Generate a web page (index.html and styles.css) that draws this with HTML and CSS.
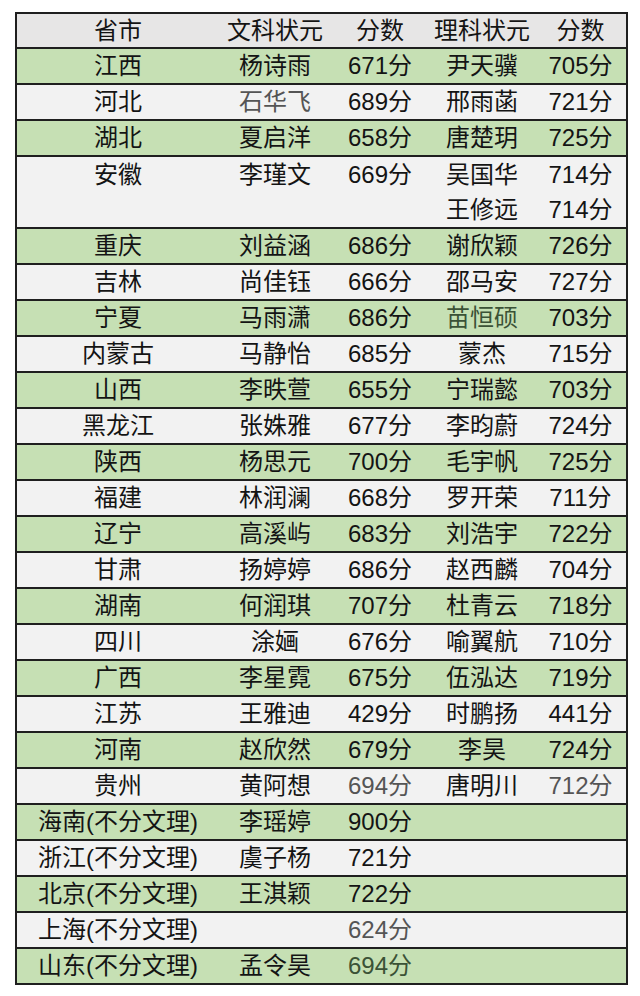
FILE: index.html
```html
<!DOCTYPE html>
<html lang="zh">
<head>
<meta charset="utf-8">
<link rel="stylesheet" href="styles.css">
<title>状元</title>
</head>
<body>
<table class="scores">
  <colgroup>
    <col class="c1"><col class="c2"><col class="c3"><col class="c4"><col class="c5">
  </colgroup>
  <thead>
    <tr class="head"><th>省市</th><th>文科状元</th><th>分数</th><th>理科状元</th><th>分数</th></tr>
  </thead>
  <tbody>
    <tr class="g"><td>江西</td><td>杨诗雨</td><td>671分</td><td>尹天骥</td><td>705分</td></tr>
    <tr class="w"><td>河北</td><td class="grey">石华飞</td><td>689分</td><td>邢雨菡</td><td>721分</td></tr>
    <tr class="g"><td>湖北</td><td>夏启洋</td><td>658分</td><td>唐楚玥</td><td>725分</td></tr>
    <tr class="w split"><td>安徽</td><td>李瑾文</td><td>669分</td><td>吴国华</td><td>714分</td></tr>
    <tr class="w"><td></td><td></td><td></td><td>王修远</td><td>714分</td></tr>
    <tr class="g"><td>重庆</td><td>刘益涵</td><td>686分</td><td>谢欣颖</td><td>726分</td></tr>
    <tr class="w"><td>吉林</td><td>尚佳钰</td><td>666分</td><td>邵马安</td><td>727分</td></tr>
    <tr class="g"><td>宁夏</td><td>马雨潇</td><td>686分</td><td class="olive">苗恒硕</td><td>703分</td></tr>
    <tr class="w"><td>内蒙古</td><td>马静怡</td><td>685分</td><td>蒙杰</td><td>715分</td></tr>
    <tr class="g"><td>山西</td><td>李昳萱</td><td>655分</td><td>宁瑞懿</td><td>703分</td></tr>
    <tr class="w"><td>黑龙江</td><td>张姝雅</td><td>677分</td><td>李昀蔚</td><td>724分</td></tr>
    <tr class="g"><td>陕西</td><td>杨思元</td><td>700分</td><td>毛宇帆</td><td>725分</td></tr>
    <tr class="w"><td>福建</td><td>林润澜</td><td>668分</td><td>罗开荣</td><td>711分</td></tr>
    <tr class="g"><td>辽宁</td><td>高溪屿</td><td>683分</td><td>刘浩宇</td><td>722分</td></tr>
    <tr class="w"><td>甘肃</td><td>扬婷婷</td><td>686分</td><td>赵西麟</td><td>704分</td></tr>
    <tr class="g"><td>湖南</td><td>何润琪</td><td>707分</td><td>杜青云</td><td>718分</td></tr>
    <tr class="w"><td>四川</td><td>涂婳</td><td>676分</td><td>喻翼航</td><td>710分</td></tr>
    <tr class="g"><td>广西</td><td>李星霓</td><td>675分</td><td>伍泓达</td><td>719分</td></tr>
    <tr class="w"><td>江苏</td><td>王雅迪</td><td>429分</td><td>时鹏扬</td><td>441分</td></tr>
    <tr class="g"><td>河南</td><td>赵欣然</td><td>679分</td><td>李昊</td><td>724分</td></tr>
    <tr class="w"><td>贵州</td><td>黄阿想</td><td class="grey">694分</td><td>唐明川</td><td class="grey">712分</td></tr>
    <tr class="g"><td>海南(不分文理)</td><td>李瑶婷</td><td>900分</td><td></td><td></td></tr>
    <tr class="w"><td>浙江(不分文理)</td><td>虞子杨</td><td>721分</td><td></td><td></td></tr>
    <tr class="g"><td>北京(不分文理)</td><td>王淇颖</td><td>722分</td><td></td><td></td></tr>
    <tr class="w"><td>上海(不分文理)</td><td></td><td class="grey">624分</td><td></td><td></td></tr>
    <tr class="g"><td>山东(不分文理)</td><td>孟令昊</td><td class="olive">694分</td><td></td><td></td></tr>
  </tbody>
</table>
</body>
</html>
```
FILE: styles.css
```css
html, body {
  margin: 0;
  padding: 0;
  background: #ffffff;
}

body {
  padding: 12px 12px 0 15px;
  font-family: "Liberation Sans", "Noto Sans CJK SC", sans-serif;
  color: #141414;
}

.scores {
  border-collapse: separate;
  border-spacing: 0;
  border: 2px solid #1f1f1f;
  border-bottom: 0;
  table-layout: fixed;
  width: 613px;
  font-size: 24px;
  line-height: 1;
}

.c1 { width: 202px; }
.c2 { width: 112px; }
.c3 { width: 98px; }
.c4 { width: 106px; }
.c5 { width: 91px; }

.scores th,
.scores td {
  padding: 0;
  text-align: center;
  vertical-align: middle;
  font-weight: normal;
  white-space: nowrap;
  border-bottom: 2px solid #1f1f1f;
}

.head th {
  height: 33px;
  background: #e7e6e6;
}

.scores td {
  height: 34px;
}

.g td { background: #c6e0b4; }
.w td { background: #f2f2f2; }

.split td { border-bottom: 0; height: 36px; }

.grey { color: #555555; }
.olive { color: #3b5236; }
```
